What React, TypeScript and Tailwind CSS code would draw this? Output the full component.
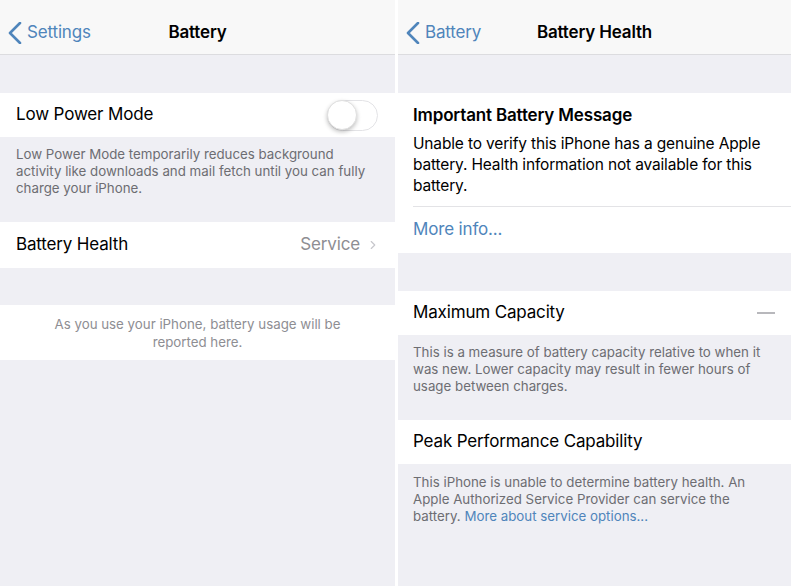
import { ChevronRight } from "lucide-react"

function NavBar({ back, title }: { back: string; title: string }) {
  return (
    <div className="relative flex h-[55px] items-center border-b border-[#dcdcdf] bg-[#f8f8f8] pt-[11px]">
      <div className="flex items-center pl-[8px] text-[17px] text-[#4f85bb]">
        <svg width="14" height="22" viewBox="0 0 14 22" fill="none">
          <polyline points="12,1 2,11 12,21" stroke="#4f85bb" strokeWidth="2.6" strokeLinecap="round" strokeLinejoin="round" />
        </svg>
        <span className="ml-[5px]">{back}</span>
      </div>
      <div className="pointer-events-none absolute inset-x-0 top-0 flex h-full items-center justify-center pt-[11px]">
        <span className="text-[17px] font-semibold text-black">{title}</span>
      </div>
    </div>
  )
}

function Toggle() {
  return (
    <div className="relative h-[31px] w-[51px] rounded-full border-[1.5px] border-[#e3e3e6] bg-white">
      <div className="absolute -left-[1px] -top-[1px] h-[30px] w-[30px] rounded-full border border-[#e0e0e0] bg-white shadow-[0_2px_4px_rgba(0,0,0,0.25)]"></div>
    </div>
  )
}

export default function App() {
  return (
    <div className="flex h-[586px] w-[791px] overflow-hidden bg-white font-['Inter',sans-serif] tracking-[-0.01em]">
      {/* Left screen: Battery */}
      <div className="flex w-[395px] flex-col bg-[#efeff4]">
        <NavBar back="Settings" title="Battery" />
        <div className="h-[38px]"></div>
        <div className="flex h-[44px] items-center justify-between bg-white pl-4 pr-[17px]">
          <span className="text-[17px] text-black">Low Power Mode</span>
          <Toggle />
        </div>
        <p className="max-w-[386px] px-4 pt-[9px] text-[13.3px] leading-[17px] tracking-normal text-[#6d6d72]">
          Low Power Mode temporarily reduces background activity like downloads and mail fetch until you can fully
          charge your iPhone.
        </p>
        <div className="h-[25px]"></div>
        <div className="flex h-[46px] items-center justify-between bg-white pl-4 pr-[15px]">
          <span className="text-[17px] text-black">Battery Health</span>
          <div className="flex items-center gap-[6px] text-[17px] text-[#8e8e93]">
            <span>Service</span>
            <ChevronRight className="h-[18px] w-[14px] text-[#c7c7cc]" strokeWidth={2} />
          </div>
        </div>
        <div className="h-[37px]"></div>
        <div className="flex h-[55px] flex-col items-center justify-center bg-white text-center text-[13.3px] leading-[18px] tracking-normal text-[#8e8e93]">
          <span>As you use your iPhone, battery usage will be</span>
          <span>reported here.</span>
        </div>
      </div>

      {/* Divider */}
      <div className="w-[3px] bg-white"></div>

      {/* Right screen: Battery Health */}
      <div className="flex flex-1 flex-col bg-[#efeff4]">
        <NavBar back="Battery" title="Battery Health" />
        <div className="h-[38px]"></div>
        <div className="bg-white pl-[15px]">
          <div className="border-b border-[#e3e3e6] pb-[10px] pr-4 pt-[11px]">
            <div className="text-[17px] font-semibold leading-[22px] text-black">Important Battery Message</div>
            <p className="mt-[7px] text-[15.5px] leading-[21px] text-black">
              Unable to verify this iPhone has a genuine Apple battery. Health information not available for this
              battery.
            </p>
          </div>
          <div className="flex h-[46px] items-center text-[17px] text-[#4f85bb]">More info...</div>
        </div>
        <div className="h-[38px]"></div>
        <div className="flex h-[44px] items-center justify-between bg-white pl-[15px] pr-4">
          <span className="text-[17px] text-black">Maximum Capacity</span>
          <div className="h-[2px] w-[18px] bg-[#b8b8bc]"></div>
        </div>
        <p className="max-w-[390px] px-[15px] pt-[9px] text-[13.3px] leading-[17px] tracking-normal text-[#6d6d72]">
          This is a measure of battery capacity relative to when it was new. Lower capacity may result in fewer hours
          of usage between charges.
        </p>
        <div className="h-[25px]"></div>
        <div className="flex h-[44px] items-center bg-white pl-[15px]">
          <span className="text-[17px] text-black">Peak Performance Capability</span>
        </div>
        <p className="max-w-[390px] px-[15px] pt-[10px] text-[13.3px] leading-[17px] tracking-normal text-[#6d6d72]">
          This iPhone is unable to determine battery health. An Apple Authorized Service Provider can service the
          battery. <span className="text-[#4f85bb]">More about service options...</span>
        </p>
      </div>
    </div>
  )
}
